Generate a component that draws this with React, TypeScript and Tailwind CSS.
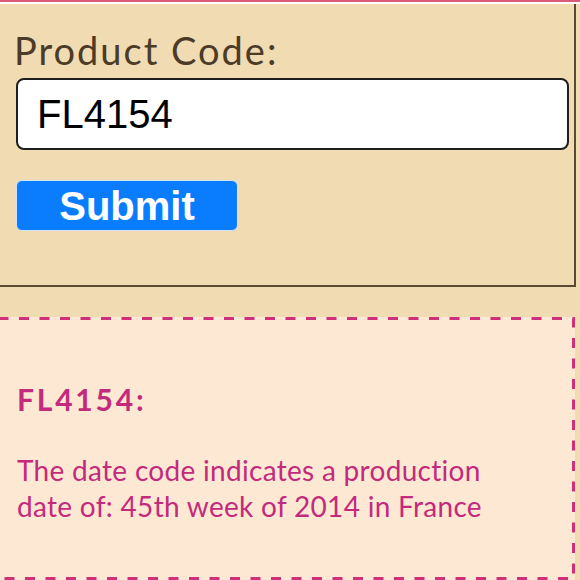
export default function App() {
  return (
    <div className="h-[580px] w-[580px] overflow-hidden bg-[#f1dbb3]">
      <div className="h-[2px] bg-[#dc5a7c]" />
      <div className="h-[2px] bg-white" />

      {/* product code form card */}
      <form
        onSubmit={(e) => e.preventDefault()}
        className="-ml-[10px] w-[586px] border-2 border-t-0 border-[#5b4a33] pb-[54px] pl-[24px] pt-[23px]"
      >
        <label
          htmlFor="code"
          className="-ml-[2px] block font-['Lato',sans-serif] text-[38px] leading-[46px] tracking-[2px] text-[#4b3b27]"
        >
          Product Code:
        </label>
        <input
          id="code"
          defaultValue="FL4154"
          className="mt-[5px] block h-[72px] w-[553px] rounded-[8px] border-2 border-[#1e1e1e] bg-white pl-[19px] font-['Liberation_Sans',Arial,sans-serif] text-[40px] text-black outline-none"
        />
        <button
          type="submit"
          className="mt-[30px] block h-[51px] w-[222px] rounded-[6px] border border-[#d3e4f6] bg-[#0a7dff] font-['Liberation_Sans',Arial,sans-serif] text-[40px] font-bold leading-[46px] text-white"
        >
          Submit
        </button>
      </form>

      {/* result box */}
      <div className="relative -ml-[10px] mt-[30px] h-[263px] w-[585px] bg-[#fde9d3] pl-[27px] pt-[64px] font-['Lato',sans-serif] text-[#c42a7c]">
        <svg className="pointer-events-none absolute inset-0" width="585" height="263">
          <rect
            x="1.5"
            y="1.5"
            width="582"
            height="260"
            fill="none"
            stroke="#cf2f7b"
            strokeWidth="3"
            strokeDasharray="10 10.5"
            strokeDashoffset="13.5"
          />
        </svg>
        <h2 className="relative text-[30px] font-bold leading-[36px] tracking-[2.8px]">FL4154:</h2>
        <p className="relative mt-[35px] max-w-[490px] text-[28px] leading-[36px] tracking-[0.3px]">
          The date code indicates a production date of: 45th week of 2014 in France
        </p>
      </div>
    </div>
  );
}
